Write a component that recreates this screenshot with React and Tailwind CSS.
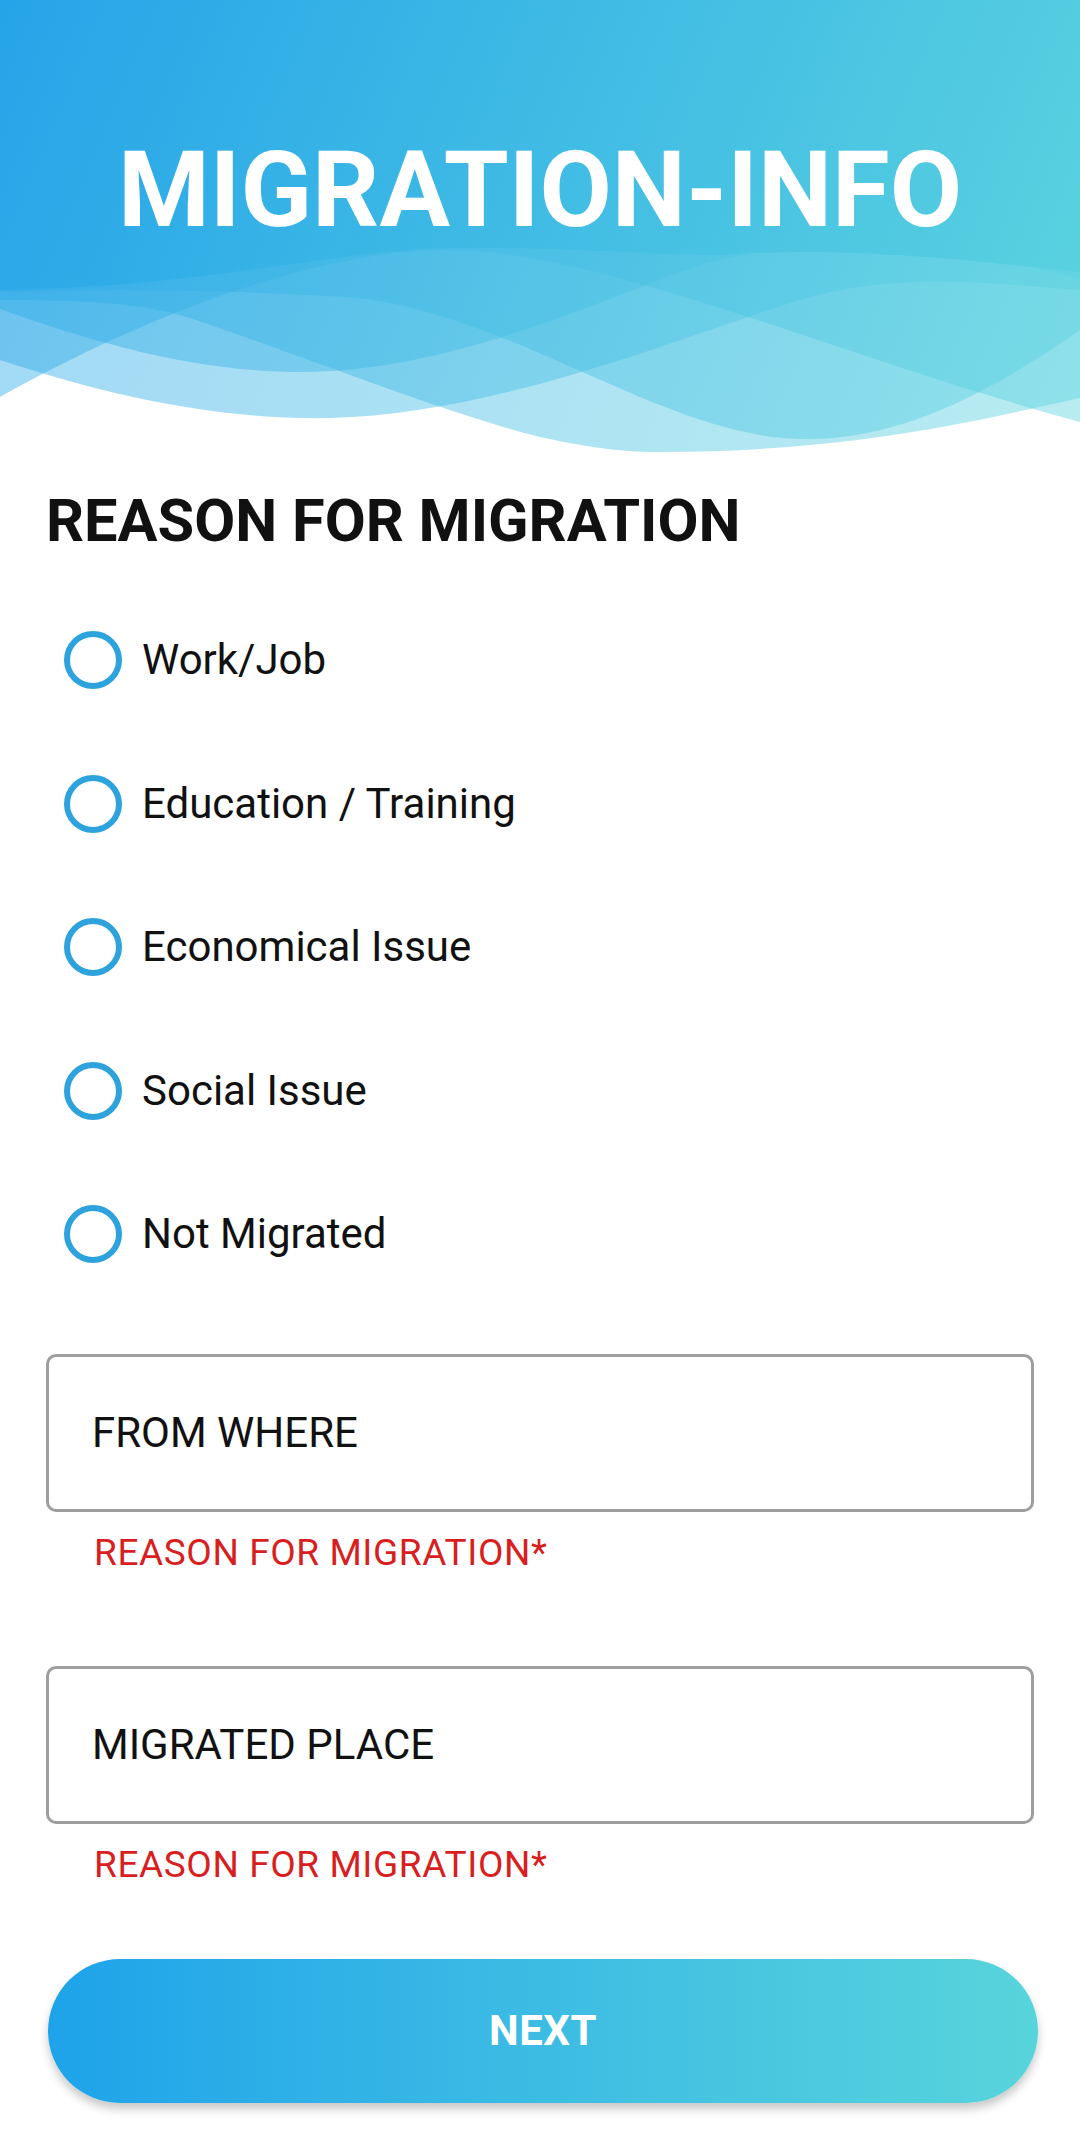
import { useState } from "react";

/* =====================
   HEADER WAVES
   (translucent layers, each filled from the top down to its curve)
===================== */
const waveLayers = [
  // A - lowest, trough near the middle
  "M0,300 C100,300 150,305 193,319 C300,355 450,415 540,437 C600,450 630,452 661,452 C850,452 980,420 1080,398",
  // Q
  "M0,292 C150,288 260,292 347,297 C500,310 640,420 773,437 C880,450 980,400 1080,330",
  // R - crest at left-centre, falls to the right
  "M0,397 C120,330 300,250 450,250 C600,250 850,360 1080,422",
  // S
  "M0,309 C100,345 200,372 300,372 C450,372 600,300 700,265 C850,225 980,250 1080,280",
  // T
  "M0,360 C120,400 230,420 330,418 C500,415 700,330 800,300 C900,270 1000,285 1080,290",
];

const HeaderWaves = () => (
  <svg
    className="absolute inset-0"
    width="1080"
    height="460"
    viewBox="0 0 1080 460"
  >
    <defs>
      <linearGradient id="hg" x1="0" y1="0" x2="1080" y2="460" gradientUnits="userSpaceOnUse">
        <stop offset="0" stopColor="#26a4e9" />
        <stop offset="1" stopColor="#5cd4df" />
      </linearGradient>
    </defs>
    {waveLayers.map((d, i) => (
      <path key={i} d={`${d} V0 H0 Z`} fill="url(#hg)" fillOpacity="0.44" />
    ))}
    <path
      d="M0,290 C200,288 320,252 450,248 C560,246 640,255 720,255 C850,245 980,262 1080,272 V0 H0 Z"
      fill="url(#hg)"
    />
  </svg>
);

/* =====================
   RADIO ROW
===================== */
const RadioRow = ({ label, checked, onSelect }) => (
  <button
    type="button"
    onClick={onSelect}
    className="flex h-[143.5px] w-full items-center gap-[20px] pl-[18px] text-left"
  >
    <span className="flex h-[58px] w-[58px] shrink-0 items-center justify-center rounded-full border-[6px] border-[#2ea2dc]">
      {checked && <span className="h-[26px] w-[26px] rounded-full bg-[#2ea2dc]" />}
    </span>
    <span className="text-[42px] leading-none text-[#111]">{label}</span>
  </button>
);

/* =====================
   INPUT + ERROR
===================== */
const Field = ({ placeholder, error, className = "" }) => (
  <div className={className}>
    <div className="flex h-[158px] items-center rounded-[10px] border-[3px] border-[#9e9e9e] pl-[43px]">
      <span className="text-[42px] leading-none text-[#111]">{placeholder}</span>
    </div>
    <p className="mt-[22px] pl-[48px] text-[37px] leading-none tracking-[0.6px] text-[#d81e1e]">
      {error}
    </p>
  </div>
);

const reasons = [
  "Work/Job",
  "Education / Training",
  "Economical Issue",
  "Social Issue",
  "Not Migrated",
];

export default function App() {
  const [reason, setReason] = useState(null);

  return (
    <div className="min-h-[2146px] w-[1080px] bg-white font-['Roboto',sans-serif]">
      {/* HEADER */}
      <header className="relative h-[460px] overflow-hidden">
        <HeaderWaves />
        <h1 className="relative pt-[138px] text-center text-[105px] font-bold leading-none text-white">
          MIGRATION-INFO
        </h1>
      </header>

      <main className="px-[46px]">
        <h2 className="mt-[32px] text-[59.5px] font-bold leading-none text-[#111]">
          REASON FOR MIGRATION
        </h2>

        {/* REASONS */}
        <div className="mt-[37px]">
          {reasons.map((r) => (
            <RadioRow
              key={r}
              label={r}
              checked={reason === r}
              onSelect={() => setReason(r)}
            />
          ))}
        </div>

        {/* FIELDS */}
        <Field
          className="mt-[48px]"
          placeholder="FROM WHERE"
          error="REASON FOR MIGRATION*"
        />
        <Field
          className="mt-[95px]"
          placeholder="MIGRATED PLACE"
          error="REASON FOR MIGRATION*"
        />

        <button
          type="button"
          className="ml-[2px] mt-[76px] flex h-[144px] w-[990px] items-center justify-center rounded-full bg-linear-to-r from-[#1ea3ea] to-[#58d4db] shadow-[0_6px_10px_rgba(0,0,0,0.22)]"
        >
          <span className="text-[42px] font-bold leading-none tracking-[0.5px] text-white">NEXT</span>
        </button>
      </main>
    </div>
  );
}
